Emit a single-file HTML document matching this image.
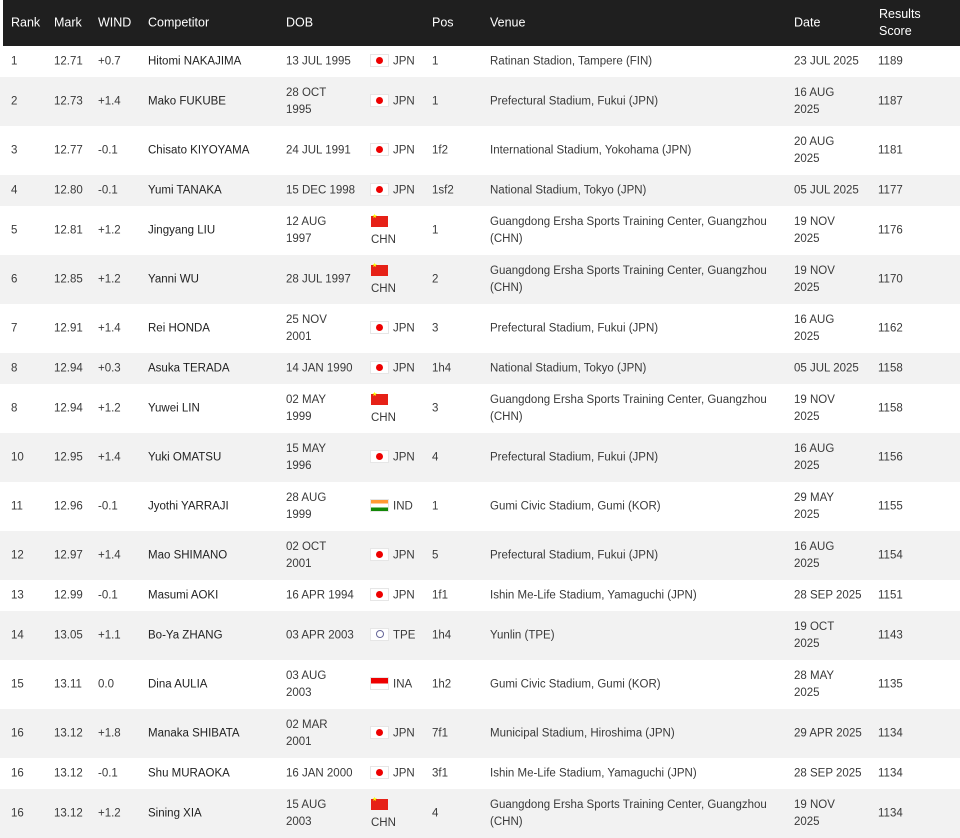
<!DOCTYPE html>
<html><head><meta charset="utf-8"><style>
body{margin:0;width:960px;height:828px;overflow:hidden;background:#fff;font-family:"Liberation Sans",sans-serif;font-size:11.5px;color:#3a3a3a}
.h{position:absolute;left:3px;top:0;width:957px;height:46px;background:#1f1f1f;color:#fff;font-size:12.5px}
.r{position:absolute;left:0;width:960px}
.g{background:#f2f2f2}
.c{position:absolute;top:50%;transform:translateY(-50%);line-height:17px}
.f{position:absolute;width:17px;height:11px;top:50%;margin-top:-7px;left:371px;background:#fff;box-shadow:0 0 0 1px #e6e6e6}
.jp::after{content:"";position:absolute;left:5px;top:2px;width:7px;height:7px;border-radius:50%;background:#e00}
.cn{background:#e62117;box-shadow:none}
.cn::after{content:"★";position:absolute;left:1px;top:-3px;font-size:6px;color:#ff0}
.in{background:linear-gradient(#f93 33%,#fff 33%,#fff 66%,#138808 66%)}
.id{background:linear-gradient(#e00 50%,#fff 50%)}
.tw::after{content:"";position:absolute;left:5px;top:1px;width:6px;height:6px;border-radius:50%;border:1px solid #669}
</style></head><body>
<div class="h">
<div class="c" style="left:8px">Rank</div><div class="c" style="left:51px">Mark</div><div class="c" style="left:95px">WIND</div><div class="c" style="left:145px">Competitor</div><div class="c" style="left:283px">DOB</div><div class="c" style="left:429px">Pos</div><div class="c" style="left:487px">Venue</div><div class="c" style="left:791px">Date</div><div class="c" style="left:876px">Results<br>Score</div>
</div>
<div id="rows"></div>
<script>
var d=[
["1","12.71","+0.7","Hitomi NAKAJIMA","13 JUL 1995","jp","JPN","1","Ratinan Stadion, Tampere (FIN)","23 JUL 2025","1189",0],
["2","12.73","+1.4","Mako FUKUBE","28 OCT<br>1995","jp","JPN","1","Prefectural Stadium, Fukui (JPN)","16 AUG<br>2025","1187",1],
["3","12.77","-0.1","Chisato KIYOYAMA","24 JUL 1991","jp","JPN","1f2","International Stadium, Yokohama (JPN)","20 AUG<br>2025","1181",1],
["4","12.80","-0.1","Yumi TANAKA","15 DEC 1998","jp","JPN","1sf2","National Stadium, Tokyo (JPN)","05 JUL 2025","1177",0],
["5","12.81","+1.2","Jingyang LIU","12 AUG<br>1997","cn","CHN","1","Guangdong Ersha Sports Training Center, Guangzhou<br>(CHN)","19 NOV<br>2025","1176",1],
["6","12.85","+1.2","Yanni WU","28 JUL 1997","cn","CHN","2","Guangdong Ersha Sports Training Center, Guangzhou<br>(CHN)","19 NOV<br>2025","1170",1],
["7","12.91","+1.4","Rei HONDA","25 NOV<br>2001","jp","JPN","3","Prefectural Stadium, Fukui (JPN)","16 AUG<br>2025","1162",1],
["8","12.94","+0.3","Asuka TERADA","14 JAN 1990","jp","JPN","1h4","National Stadium, Tokyo (JPN)","05 JUL 2025","1158",0],
["8","12.94","+1.2","Yuwei LIN","02 MAY<br>1999","cn","CHN","3","Guangdong Ersha Sports Training Center, Guangzhou<br>(CHN)","19 NOV<br>2025","1158",1],
["10","12.95","+1.4","Yuki OMATSU","15 MAY<br>1996","jp","JPN","4","Prefectural Stadium, Fukui (JPN)","16 AUG<br>2025","1156",1],
["11","12.96","-0.1","Jyothi YARRAJI","28 AUG<br>1999","in","IND","1","Gumi Civic Stadium, Gumi (KOR)","29 MAY<br>2025","1155",1],
["12","12.97","+1.4","Mao SHIMANO","02 OCT<br>2001","jp","JPN","5","Prefectural Stadium, Fukui (JPN)","16 AUG<br>2025","1154",1],
["13","12.99","-0.1","Masumi AOKI","16 APR 1994","jp","JPN","1f1","Ishin Me-Life Stadium, Yamaguchi (JPN)","28 SEP 2025","1151",0],
["14","13.05","+1.1","Bo-Ya ZHANG","03 APR 2003","tw","TPE","1h4","Yunlin (TPE)","19 OCT<br>2025","1143",1],
["15","13.11","0.0","Dina AULIA","03 AUG<br>2003","id","INA","1h2","Gumi Civic Stadium, Gumi (KOR)","28 MAY<br>2025","1135",1],
["16","13.12","+1.8","Manaka SHIBATA","02 MAR<br>2001","jp","JPN","7f1","Municipal Stadium, Hiroshima (JPN)","29 APR 2025","1134",1],
["16","13.12","-0.1","Shu MURAOKA","16 JAN 2000","jp","JPN","3f1","Ishin Me-Life Stadium, Yamaguchi (JPN)","28 SEP 2025","1134",0],
["16","13.12","+1.2","Sining XIA","15 AUG<br>2003","cn","CHN","4","Guangdong Ersha Sports Training Center, Guangzhou<br>(CHN)","19 NOV<br>2025","1134",1]];
var y=46,h="";
d.forEach(function(r,i){var H=r[11]?49:31;var cn=r[5]=="cn";
h+='<div class="r'+(i%2?' g':'')+'" style="top:'+y+'px;height:'+H+'px">'+
'<div class="c" style="left:11px">'+r[0]+'</div><div class="c" style="left:54px">'+r[1]+'</div><div class="c" style="left:98px">'+r[2]+'</div><div class="c" style="left:148px;color:#222">'+r[3]+'</div><div class="c" style="left:286px">'+r[4]+'</div>'+
(cn?'<div class="f cn" style="margin-top:-15px"></div><div class="c" style="left:371px;top:auto;transform:none;bottom:6px">CHN</div>':'<div class="f '+r[5]+'"></div><div class="c" style="left:393px">'+r[6]+'</div>')+
'<div class="c" style="left:432px">'+r[7]+'</div><div class="c" style="left:490px">'+r[8]+'</div><div class="c" style="left:794px">'+r[9]+'</div><div class="c" style="left:878px">'+r[10]+'</div></div>';
y+=H;});
document.getElementById("rows").innerHTML=h;
</script>
</body></html>
